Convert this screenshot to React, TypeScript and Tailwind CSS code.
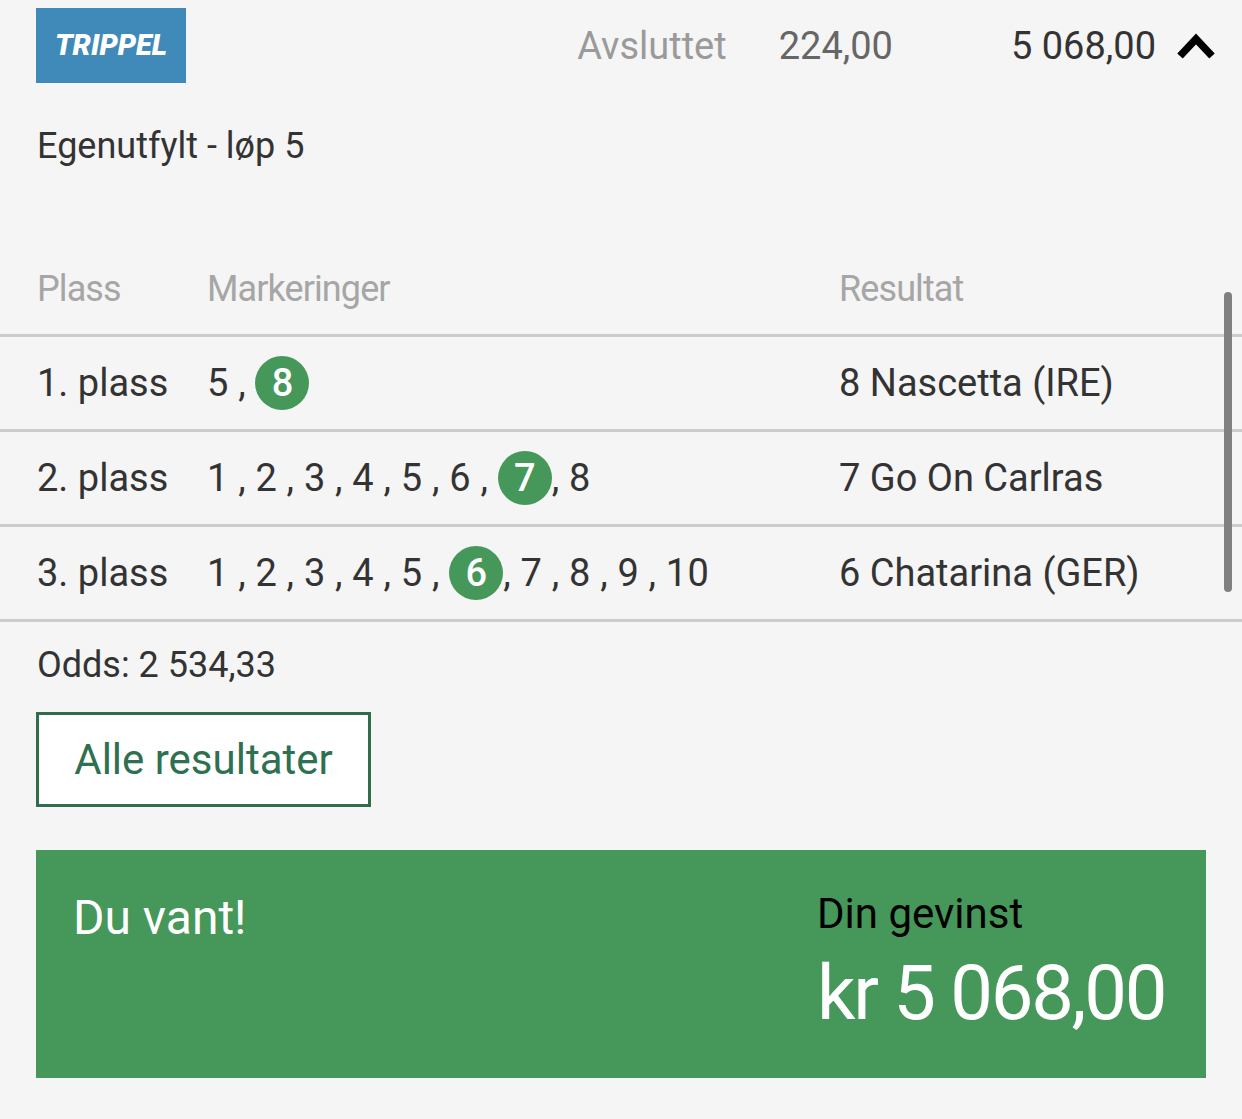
function Pick({ n }: { n: string }) {
  return (
    <span className="inline-flex h-[54px] w-[54px] items-center justify-center rounded-full bg-[#46975a] font-medium tracking-normal text-white">
      {n}
    </span>
  );
}

const rows = [
  {
    place: "1. plass",
    marks: (
      <>
        <span className="whitespace-pre">5 , </span>
        <Pick n="8" />
      </>
    ),
    result: "8 Nascetta (IRE)",
  },
  {
    place: "2. plass",
    marks: (
      <>
        <span className="whitespace-pre">1 , 2 , 3 , 4 , 5 , 6 , </span>
        <Pick n="7" />
        <span className="whitespace-pre">, 8</span>
      </>
    ),
    result: "7 Go On Carlras",
  },
  {
    place: "3. plass",
    marks: (
      <>
        <span className="whitespace-pre">1 , 2 , 3 , 4 , 5 , </span>
        <Pick n="6" />
        <span className="whitespace-pre">, 7 , 8 , 9 , 10</span>
      </>
    ),
    result: "6 Chatarina (GER)",
  },
];

export default function App() {
  return (
    <div className="relative min-h-screen bg-[#f5f5f5] font-['Roboto',sans-serif] text-[#333333]">
      {/* header */}
      <div className="flex h-[91px] items-center pl-[36px] pr-[26px]">
        <div className="flex h-[75px] w-[150px] items-center justify-center bg-[#3f8ab8]">
          <span className="text-[29px] font-black italic leading-none text-white">TRIPPEL</span>
        </div>
        <div className="ml-auto flex items-center text-[38px] leading-none">
          <span className="text-[#9a9a9a]">Avsluttet</span>
          <span className="ml-[52px] text-[#666666]">224,00</span>
          <span className="ml-[118px] text-[#333333]">5 068,00</span>
          <svg className="ml-[20px]" width="40" height="28" viewBox="0 0 40 28">
            <polyline points="4,24 20,7 36,24" fill="none" stroke="#000" strokeWidth="7.5" />
          </svg>
        </div>
      </div>

      <div className="flex h-[110px] items-center pl-[37px] text-[36px]">Egenutfylt - løp 5</div>

      {/* table */}
      <div className="grid h-[136px] grid-cols-[170px_632px_1fr] items-end border-b-[3px] border-[#cccccc] pb-[24px] pl-[37px] text-[36px] leading-[42px] tracking-[-0.025em] text-[#a6a6a6]">
        <span>Plass</span>
        <span>Markeringer</span>
        <span>Resultat</span>
      </div>
      {rows.map((r) => (
        <div
          key={r.place}
          className="grid h-[95px] grid-cols-[170px_632px_1fr] items-center border-b-[3px] border-[#cccccc] pl-[37px] text-[38px] leading-none"
        >
          <span>{r.place}</span>
          <span className="flex items-center tracking-[0.005em]">{r.marks}</span>
          <span>{r.result}</span>
        </div>
      ))}

      <div className="mt-[22px] pl-[37px] text-[36px] leading-[42px]">Odds: 2 534,33</div>

      <div className="mt-[26px] pl-[36px]">
        <button className="flex h-[95px] w-[335px] items-center justify-center border-[3px] border-[#2e6e4b] bg-white text-[42px] text-[#2e7050]">
          Alle resultater
        </button>
      </div>

      {/* win box */}
      <div className="mx-[36px] mt-[43px] grid h-[228px] grid-cols-[744px_1fr] bg-[#46975a] pl-[37px]">
        <div className="pt-[44px] text-[48px] leading-none text-white">Du vant!</div>
        <div className="pt-[43px]">
          <div className="text-[42px] leading-none text-black">Din gevinst</div>
          <div className="mt-[20px] text-[76px] leading-none tracking-[-0.03em] text-white">kr 5 068,00</div>
        </div>
      </div>

      {/* scrollbar */}
      <div className="absolute right-[10px] top-[292px] h-[300px] w-[8px] rounded-full bg-[#808080]" />
    </div>
  );
}
